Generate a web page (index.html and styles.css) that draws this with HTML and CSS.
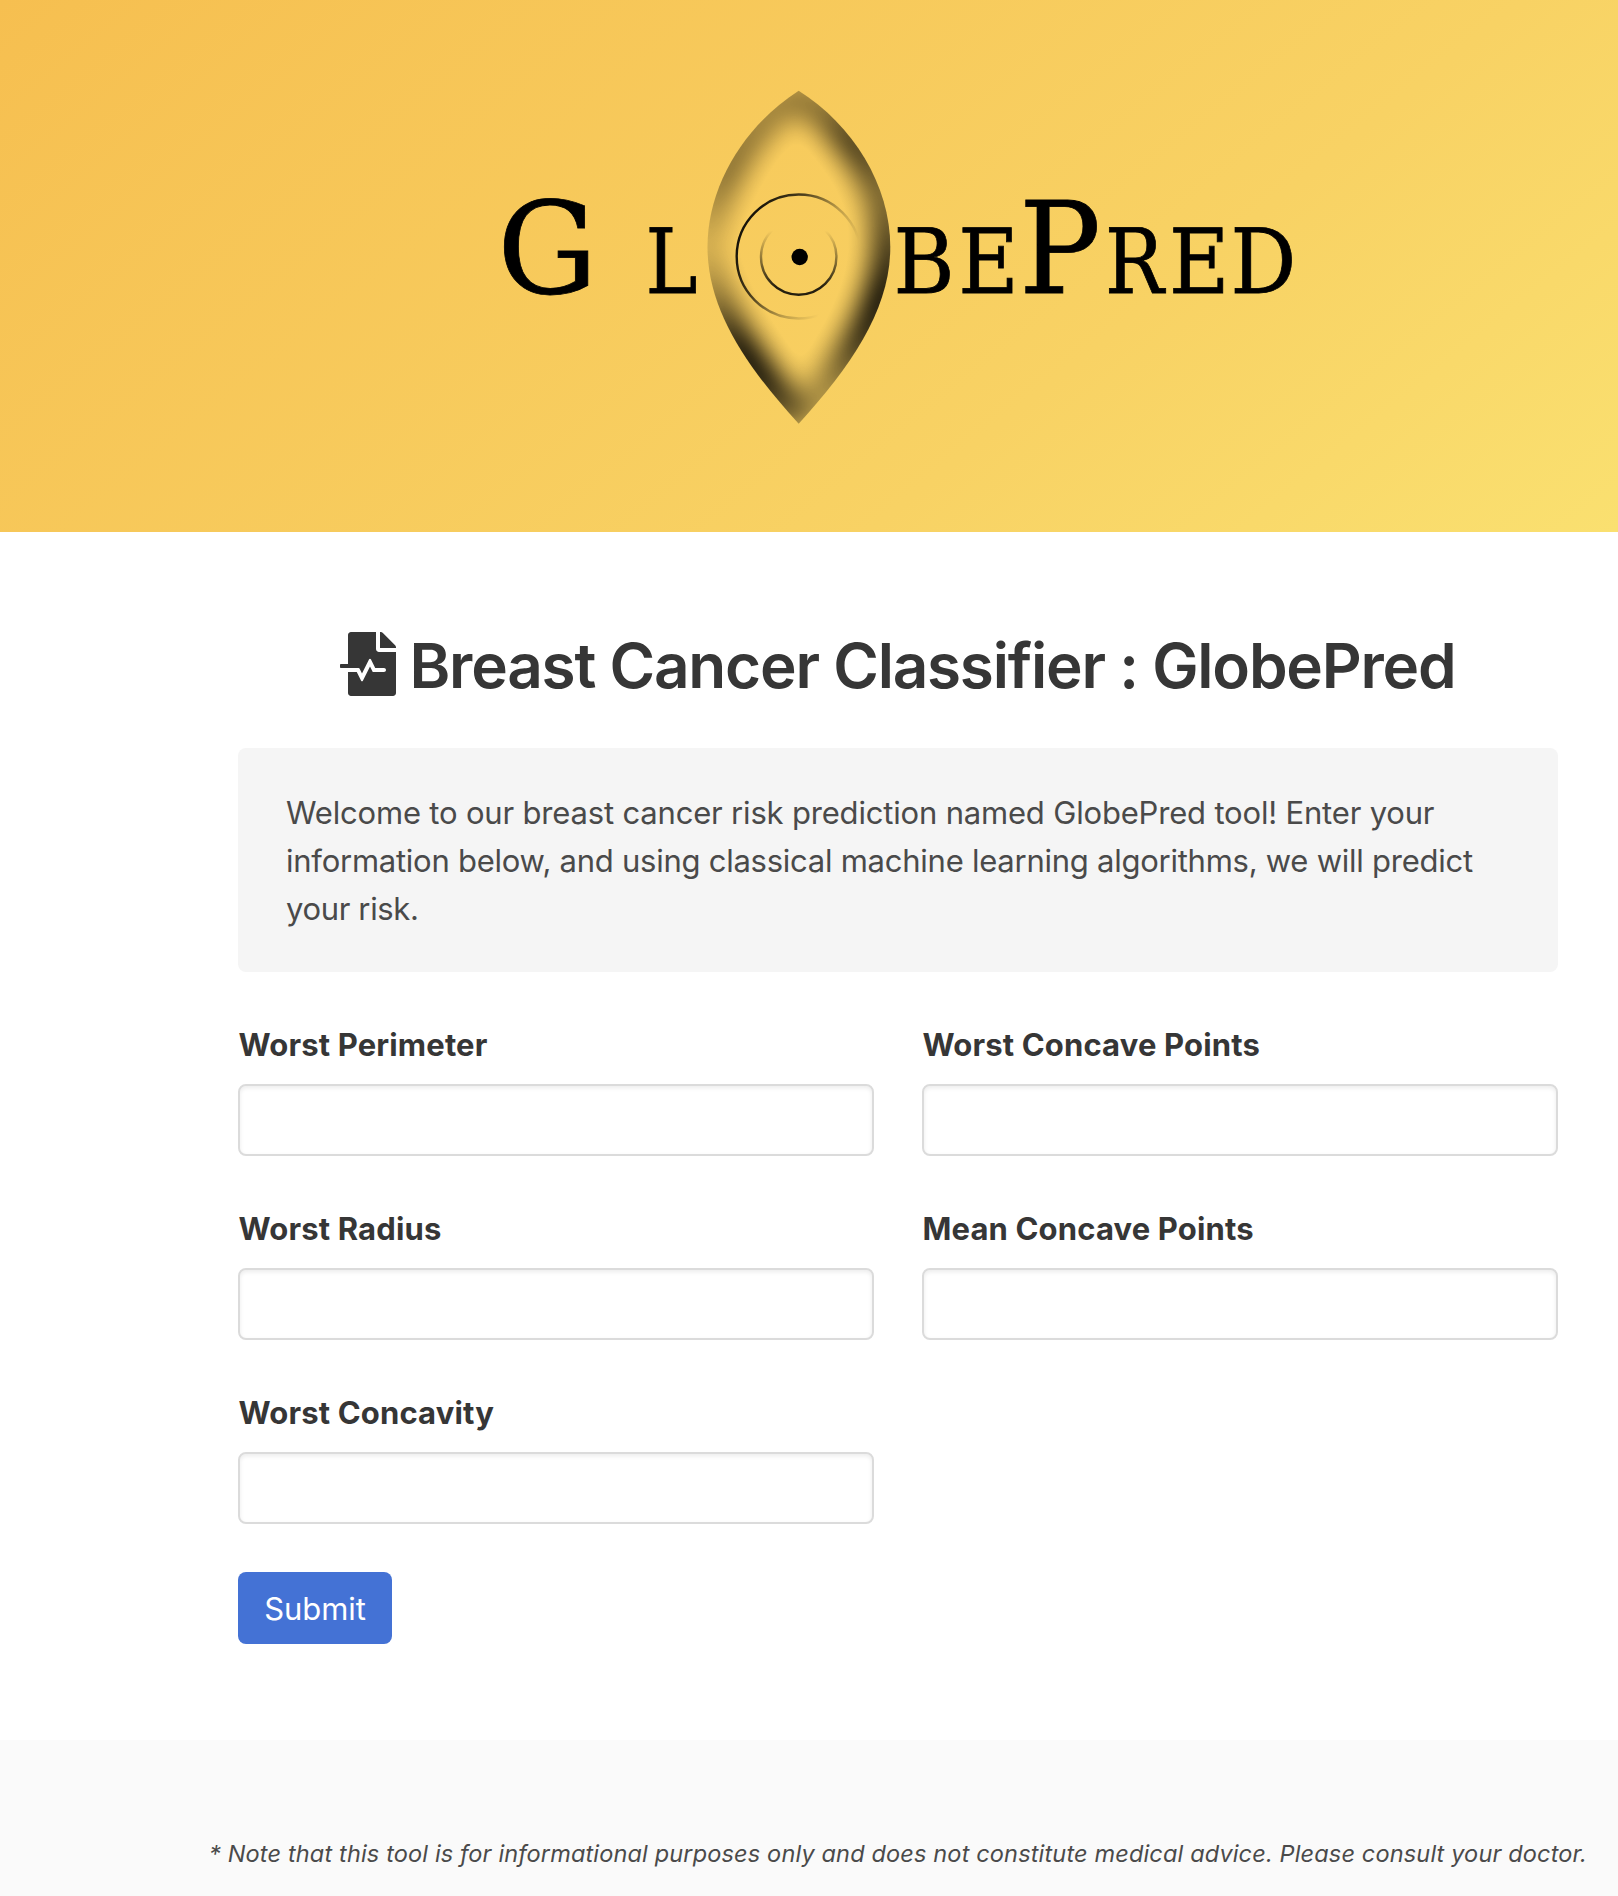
FILE: index.html
```html
<!DOCTYPE html>
<html lang="en">
<head>
<meta charset="utf-8">
<title>GlobePred</title>
<link rel="stylesheet" href="styles.css">
</head>
<body>
<header class="hero">
  <svg class="logo" width="820" height="360" viewBox="490 80 820 360" role="img" aria-label="GlobePred">
    <defs>
      <clipPath id="lens"><path d="M798.7 90.7C745 125 707.5 185 707.5 247C707.5 308 744 364 798.7 423.7C853 364 890.3 308 890.3 247C890.3 185 853 125 798.7 90.7Z"/></clipPath>
      <linearGradient id="left" gradientUnits="userSpaceOnUse" x1="0" y1="90" x2="0" y2="424">
        <stop offset="0" stop-opacity=".35"/><stop offset=".25" stop-opacity=".5"/><stop offset=".47" stop-opacity=".14"/><stop offset=".6" stop-opacity=".4"/><stop offset=".78" stop-opacity="1"/><stop offset=".9" stop-opacity=".9"/><stop offset="1" stop-opacity=".4"/>
      </linearGradient>
      <linearGradient id="right" gradientUnits="userSpaceOnUse" x1="0" y1="90" x2="0" y2="424">
        <stop offset="0" stop-opacity=".3"/><stop offset=".15" stop-opacity=".78"/><stop offset=".32" stop-opacity=".52"/><stop offset=".46" stop-opacity=".75"/><stop offset=".62" stop-opacity="1"/><stop offset=".75" stop-opacity=".85"/><stop offset=".9" stop-opacity=".35"/><stop offset="1" stop-opacity=".2"/>
      </linearGradient>
      <linearGradient id="outer" gradientUnits="userSpaceOnUse" x1="750" y1="225" x2="846" y2="275">
        <stop offset="0" stop-opacity=".9"/><stop offset=".3" stop-opacity=".7"/><stop offset=".65" stop-opacity=".25"/><stop offset=".95" stop-opacity="0"/>
      </linearGradient>
      <linearGradient id="inner" gradientUnits="userSpaceOnUse" x1="0" y1="222" x2="0" y2="294">
        <stop offset="0" stop-opacity="0"/><stop offset=".12" stop-opacity="0"/><stop offset=".9" stop-opacity=".85"/>
      </linearGradient>
      <filter id="soft" filterUnits="userSpaceOnUse" x="600" y="0" width="400" height="520" color-interpolation-filters="sRGB"><feGaussianBlur stdDeviation="15"/><feComponentTransfer><feFuncA type="linear" slope="1.2" intercept="-0.03"/></feComponentTransfer></filter>
    </defs>
    <g clip-path="url(#lens)">
      <g filter="url(#soft)" fill="none" stroke-width="32">
        <path stroke="url(#left)" d="M798.7 90.7C745 125 707.5 185 707.5 247C707.5 308 744 364 798.7 423.7"/>
        <path stroke="url(#right)" d="M798.7 90.7C853 125 890.3 185 890.3 247C890.3 308 853 364 798.7 423.7"/>
      </g>
    </g>
    <circle cx="798.7" cy="256.5" r="62" fill="none" stroke="url(#outer)" stroke-width="2.4"/>
    <circle cx="798.7" cy="257" r="37.7" fill="none" stroke="url(#inner)" stroke-width="2.4"/>
    <circle cx="799.7" cy="257" r="8.2"/>
    <g class="wordmark">
      <text class="cap" x="497.3" y="292.5" textLength="100.5" lengthAdjust="spacingAndGlyphs">G</text>
      <text x="645.6" y="292.5" textLength="52" lengthAdjust="spacingAndGlyphs">L</text>
      <text x="893.5" y="292.5" textLength="61" lengthAdjust="spacingAndGlyphs">B</text>
      <text x="958.2" y="292.5" textLength="60.4" lengthAdjust="spacingAndGlyphs">E</text>
      <text class="cap" x="1018.9" y="292.5" textLength="82" lengthAdjust="spacingAndGlyphs">P</text>
      <text x="1105" y="292.5" textLength="58.9" lengthAdjust="spacingAndGlyphs">R</text>
      <text x="1168.9" y="292.5" textLength="60.4" lengthAdjust="spacingAndGlyphs">E</text>
      <text x="1230.6" y="292.5" textLength="65.8" lengthAdjust="spacingAndGlyphs">D</text>
    </g>
  </svg>
</header>
<main class="section">
  <div class="heading">
    <svg width="56" height="64" viewBox="0 0 448 512" fill="currentColor" aria-hidden="true"><path d="M288 136V0H88C74.7 0 64 10.7 64 24v232H8c-4.4 0-8 3.6-8 8v16c0 4.4 3.6 8 8 8h140.9c3 0 5.8 1.7 7.2 4.4l19.9 39.8 56.8-113.7c2.9-5.9 11.4-5.9 14.3 0l34.7 69.5H352c8.8 0 16 7.2 16 16s-7.2 16-16 16h-89.9L240 275.8l-56.8 113.7c-2.9 5.9-11.4 5.9-14.3 0L134.1 320H64v168c0 13.3 10.7 24 24 24h336c13.3 0 24-10.7 24-24V160H312c-13.2 0-24-10.8-24-24zm153-31L343.1 7c-4.5-4.5-10.6-7-17-7H320v128h128v-6.1c0-6.3-2.5-12.4-7-16.9z"/></svg>
    <h1 class="title">Breast Cancer Classifier : GlobePred</h1>
  </div>
  <p class="notification"><span class="intro-a">Welcome to our breast cancer risk prediction named GlobePred tool! Enter your</span><br><span class="intro-b">information below, and using classical machine learning algorithms, we will predict</span><br><span class="intro-c">your risk.</span></p>
  <form class="form">
    <div class="fields">
      <div class="field"><label class="label" for="wp">Worst Perimeter</label><input class="input" id="wp" type="text"></div>
      <div class="field"><label class="label" for="wcp">Worst Concave Points</label><input class="input" id="wcp" type="text"></div>
      <div class="field"><label class="label" for="wr">Worst Radius</label><input class="input" id="wr" type="text"></div>
      <div class="field"><label class="label" for="mcp">Mean Concave Points</label><input class="input" id="mcp" type="text"></div>
      <div class="field"><label class="label" for="wc">Worst Concavity</label><input class="input" id="wc" type="text"></div>
    </div>
    <button class="button" type="button">Submit</button>
  </form>
</main>
<footer class="footer">
  <p class="note">* Note that this tool is for informational purposes only and does not constitute medical advice. Please consult your doctor.</p>
</footer>
</body>
</html>
```
FILE: styles.css
```css
* { box-sizing: border-box; }

body {
  margin: 0;
  min-height: 1896px;
  display: flex;
  flex-direction: column;
  background: #fff;
  color: #4a4a4a;
  font-family: Inter, "Liberation Sans", sans-serif;
  overflow-x: hidden;
}

.hero {
  height: 532px;
  padding: 80px 0 0 490px;
  background: linear-gradient(141deg, #f6bf50 0%, #f8d264 67%, #fae070 100%);
}

.logo { display: block; }

.wordmark {
  font-family: "DejaVu Serif", serif;
  font-size: 89.6px;
  stroke: #000;
  stroke-width: 0.8px;
}

.wordmark .cap { font-size: 128px; }

.section {
  padding: 100px 60px 96px 238px;
}

.heading {
  display: flex;
  justify-content: center;
  gap: 13px;
  height: 67px;
  margin-bottom: 49px;
  color: #363636;
}

.title {
  margin: 0;
  font-size: 62px;
  font-weight: 600;
  line-height: 67px;
  letter-spacing: -1.22px;
  white-space: nowrap;
}

.notification {
  height: 224px;
  margin: 0 0 48px;
  padding: 41px 48px 0;
  border-radius: 8px;
  background: #f5f5f5;
  font-size: 31px;
  line-height: 48px;
  white-space: nowrap;
}

.intro-a { letter-spacing: -0.18px; }
.intro-b { letter-spacing: -0.25px; }
.intro-c { letter-spacing: -0.35px; }

.fields {
  display: grid;
  grid-template-columns: 1fr 1fr;
  gap: 48px;
  margin-bottom: 48px;
}

.label {
  display: block;
  height: 48px;
  margin-bottom: 16px;
  padding-left: 0.5px;
  color: #363636;
  font-size: 31px;
  font-weight: 700;
  line-height: 49px;
  letter-spacing: 0.15px;
}

.input {
  display: block;
  width: 100%;
  height: 72px;
  padding: 0 20px;
  border: 2px solid #dbdbdb;
  border-radius: 8px;
  background: #fff;
  box-shadow: inset 0 2px 4px rgba(10, 10, 10, 0.08);
  color: #363636;
  font: inherit;
  font-size: 31px;
}

.button {
  display: block;
  width: 154px;
  height: 72px;
  padding: 0;
  border: 0;
  border-radius: 8px;
  background: #4472d5;
  color: #fff;
  font-family: inherit;
  font-size: 31px;
  font-weight: 400;
  letter-spacing: -0.1px;
}

.footer {
  flex: 1;
  padding: 96px 0 24px 178px;
  background: #fafafa;
}

.note {
  margin: 0;
  font-size: 23.5px;
  font-style: italic;
  line-height: 36px;
  letter-spacing: 0.158px;
  text-align: center;
  white-space: nowrap;
}
```
